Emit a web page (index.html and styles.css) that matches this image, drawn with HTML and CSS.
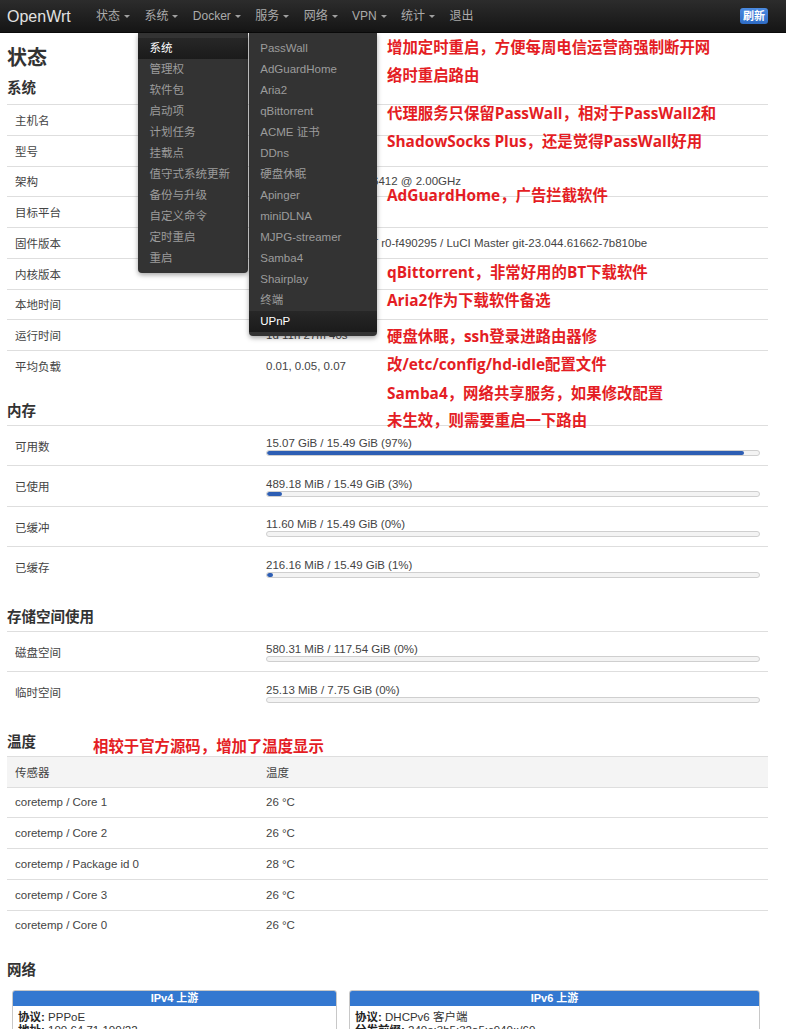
FILE: index.html
```html
<!DOCTYPE html>
<html lang="zh-CN">
<head>
<meta charset="utf-8">
<title>OpenWrt - 状态</title>
<link rel="stylesheet" href="styles.css">
</head>
<body>
<header class="navbar">
  <a class="brand">OpenWrt</a>
  <ul class="nav">
    <li class="nav-item">状态<i class="caret"></i></li>
    <li class="nav-item">系统<i class="caret"></i>
      <ul class="dropdown dd-system">
        <li class="active">系统</li>
        <li>管理权</li>
        <li>软件包</li>
        <li>启动项</li>
        <li>计划任务</li>
        <li>挂载点</li>
        <li>值守式系统更新</li>
        <li>备份与升级</li>
        <li>自定义命令</li>
        <li>定时重启</li>
        <li>重启</li>
      </ul>
    </li>
    <li class="nav-item">Docker<i class="caret"></i></li>
    <li class="nav-item">服务<i class="caret"></i>
      <ul class="dropdown dd-services">
        <li>PassWall</li>
        <li>AdGuardHome</li>
        <li>Aria2</li>
        <li>qBittorrent</li>
        <li>ACME 证书</li>
        <li>DDns</li>
        <li>硬盘休眠</li>
        <li>Apinger</li>
        <li>miniDLNA</li>
        <li>MJPG-streamer</li>
        <li>Samba4</li>
        <li>Shairplay</li>
        <li>终端</li>
        <li class="active">UPnP</li>
      </ul>
    </li>
    <li class="nav-item">网络<i class="caret"></i></li>
    <li class="nav-item">VPN<i class="caret"></i></li>
    <li class="nav-item">统计<i class="caret"></i></li>
    <li class="nav-item">退出</li>
  </ul>
  <span class="btn-refresh">刷新</span>
</header>

<main class="page">
  <h2 class="page-title">状态</h2>

  <h3 class="section-title first">系统</h3>
  <div class="table">
    <div class="row"><div class="cell-label">主机名</div><div class="cell-value">OpenWrt</div></div>
    <div class="row"><div class="cell-label">型号</div><div class="cell-value">Default string</div></div>
    <div class="row"><div class="cell-label">架构</div><div class="cell-value">Intel(R) Celeron(R) J6412 @ 2.00GHz</div></div>
    <div class="row"><div class="cell-label">目标平台</div><div class="cell-value">x86/64</div></div>
    <div class="row"><div class="cell-label">固件版本</div><div class="cell-value">OpenWrt SNAPSHOT r0-f490295 / LuCI Master git-23.044.61662-7b810be</div></div>
    <div class="row"><div class="cell-label">内核版本</div><div class="cell-value">5.15.94</div></div>
    <div class="row"><div class="cell-label">本地时间</div><div class="cell-value">2023-02-14 19:45:12</div></div>
    <div class="row"><div class="cell-label">运行时间</div><div class="cell-value">1d 11h 27m 40s</div></div>
    <div class="row"><div class="cell-label">平均负载</div><div class="cell-value">0.01, 0.05, 0.07</div></div>
  </div>

  <h3 class="section-title">内存</h3>
  <div class="table">
    <div class="row row-bar"><div class="cell-label">可用数</div><div class="cell-value"><div class="bar-text">15.07 GiB / 15.49 GiB (97%)</div><div class="bar"><div class="bar-fill" style="width:97%"></div></div></div></div>
    <div class="row row-bar"><div class="cell-label">已使用</div><div class="cell-value"><div class="bar-text">489.18 MiB / 15.49 GiB (3%)</div><div class="bar"><div class="bar-fill" style="width:3%"></div></div></div></div>
    <div class="row row-bar"><div class="cell-label">已缓冲</div><div class="cell-value"><div class="bar-text">11.60 MiB / 15.49 GiB (0%)</div><div class="bar"><div class="bar-fill" style="width:0%"></div></div></div></div>
    <div class="row row-bar"><div class="cell-label">已缓存</div><div class="cell-value"><div class="bar-text">216.16 MiB / 15.49 GiB (1%)</div><div class="bar"><div class="bar-fill" style="width:1.2%"></div></div></div></div>
  </div>

  <h3 class="section-title">存储空间使用</h3>
  <div class="table">
    <div class="row row-bar"><div class="cell-label">磁盘空间</div><div class="cell-value"><div class="bar-text">580.31 MiB / 117.54 GiB (0%)</div><div class="bar"><div class="bar-fill" style="width:0%"></div></div></div></div>
    <div class="row row-bar"><div class="cell-label">临时空间</div><div class="cell-value"><div class="bar-text">25.13 MiB / 7.75 GiB (0%)</div><div class="bar"><div class="bar-fill" style="width:0%"></div></div></div></div>
  </div>

  <h3 class="section-title">温度</h3>
  <div class="table">
    <div class="row row-head"><div class="cell-label">传感器</div><div class="cell-value">温度</div></div>
    <div class="row"><div class="cell-label">coretemp / Core 1</div><div class="cell-value">26 °C</div></div>
    <div class="row"><div class="cell-label">coretemp / Core 2</div><div class="cell-value">26 °C</div></div>
    <div class="row"><div class="cell-label">coretemp / Package id 0</div><div class="cell-value">28 °C</div></div>
    <div class="row"><div class="cell-label">coretemp / Core 3</div><div class="cell-value">26 °C</div></div>
    <div class="row"><div class="cell-label">coretemp / Core 0</div><div class="cell-value">26 °C</div></div>
  </div>

  <h3 class="section-title net-title">网络</h3>
  <div class="net-grid">
    <div class="net-box">
      <div class="net-head">IPv4 上游</div>
      <div class="net-body">
        <div><b>协议:</b> PPPoE</div>
        <div><b>地址:</b> 100.64.71.100/22</div>
      </div>
    </div>
    <div class="net-box">
      <div class="net-head">IPv6 上游</div>
      <div class="net-body">
        <div><b>协议:</b> DHCPv6 客户端</div>
        <div><b>分发前缀:</b> 240e:3b5:32a5:c940::/60</div>
      </div>
    </div>
  </div>
</main>

<div class="notes">
  <p class="note n1">增加定时重启，方便每周电信运营商强制断开网</p>
  <p class="note n2">络时重启路由</p>
  <p class="note n3">代理服务只保留PassWall，相对于PassWall2和</p>
  <p class="note n4">ShadowSocks Plus，还是觉得PassWall好用</p>
  <p class="note n5">AdGuardHome，广告拦截软件</p>
  <p class="note n6">qBittorrent，非常好用的BT下载软件</p>
  <p class="note n7">Aria2作为下载软件备选</p>
  <p class="note n8">硬盘休眠，ssh登录进路由器修</p>
  <p class="note n9">改/etc/config/hd-idle配置文件</p>
  <p class="note n10">Samba4，网络共享服务，如果修改配置</p>
  <p class="note n11">未生效，则需要重启一下路由</p>
  <p class="note n12">相较于官方源码，增加了温度显示</p>
</div>
</body>
</html>
```

FILE: styles.css
```css
html, body {
  margin: 0;
  padding: 0;
  background: #fff;
}

body {
  position: relative;
  font-family: "Liberation Sans", "Noto Sans CJK SC", sans-serif;
  font-size: 11.5px;
  color: #444;
  overflow: hidden;
}

/* ---------- navbar ---------- */
.navbar {
  display: flex;
  align-items: center;
  height: 33px;
  padding: 0 18px 0 7px;
  background: linear-gradient(#2c2c2c, #151515);
  border-bottom: 1px solid #0a0a0a;
  box-sizing: border-box;
  position: relative;
  z-index: 20;
}

.brand {
  width: 83px;
  color: #e2e2e2;
  font-size: 16px;
  line-height: 33px;
  font-family: "Liberation Sans", sans-serif;
}

.nav {
  display: flex;
  list-style: none;
  margin: 0;
  padding: 0;
  height: 33px;
}

.nav-item {
  position: relative;
  padding: 0 8.4px 0 6px;
  line-height: 32px;
  font-size: 12px;
  color: #ababab;
  white-space: nowrap;
}

.caret {
  display: inline-block;
  width: 0;
  height: 0;
  margin-left: 4px;
  vertical-align: middle;
  border-left: 3px solid transparent;
  border-right: 3px solid transparent;
  border-top: 3px solid #a0a0a0;
}

.dropdown {
  position: absolute;
  top: 33px;
  left: 0;
  margin: 0;
  padding: 5px 0 4px;
  list-style: none;
  background: #333;
  border-radius: 0 0 4px 4px;
  box-shadow: 0 2px 5px rgba(0, 0, 0, 0.35);
}

.dd-system { width: 110px; }
.dd-services { width: 128px; }

.dropdown li {
  height: 21px;
  line-height: 21px;
  padding-left: 11px;
  font-size: 11.5px;
  color: #9c9c9c;
  white-space: nowrap;
}

.dropdown li.active {
  color: #fff;
  background: linear-gradient(#272727, #1b1b1b);
}

.btn-refresh {
  margin-left: auto;
  padding: 2px 3px;
  font-size: 11px;
  line-height: 12px;
  font-weight: bold;
  color: #fff;
  background: linear-gradient(#4a8ae0, #2f6cc4);
  border-radius: 3px;
}

/* ---------- page ---------- */
.page {
  padding: 0 18px 0 7px;
}

.page-title {
  margin: 12px 0 0;
  font-size: 20px;
  line-height: 26px;
  font-weight: bold;
  color: #333;
}

.section-title {
  margin: 20px 0 4px;
  font-size: 14.5px;
  line-height: 20px;
  font-weight: bold;
  color: #333;
}

.section-title.first {
  margin-top: 7px;
  margin-bottom: 6px;
}

.table {
  display: flex;
  flex-direction: column;
}

.row {
  display: grid;
  grid-template-columns: 259px 1fr;
  align-items: center;
  height: 30.75px;
  box-sizing: border-box;
  border-top: 1px solid #dedede;
}

.cell-label {
  padding-left: 8px;
  color: #444;
  white-space: nowrap;
}

.cell-value {
  padding-right: 8px;
  color: #444;
  white-space: nowrap;
}

.row-bar {
  height: 40.5px;
}

.row-bar .cell-value {
  padding-top: 1px;
}

.bar-text {
  line-height: 14px;
}

.bar {
  height: 6px;
  box-sizing: border-box;
  border: 1px solid #cfcfcf;
  border-radius: 3px;
  background: #f3f3f3;
  overflow: hidden;
}

.bar-fill {
  height: 100%;
  background: #2d5eb4;
  border-radius: 2px;
}

.row-head {
  background: #f4f4f4;
}

/* ---------- network ---------- */
.net-title {
  margin-top: 20px;
  margin-bottom: 10px;
}

.net-grid {
  display: grid;
  grid-template-columns: 325px 1fr;
  gap: 12px;
  padding: 0 8px 0 5px;
}

.net-box {
  border: 1px solid #c8c8c8;
  border-radius: 3px;
  overflow: hidden;
  height: 60px;
}

.net-head {
  height: 15px;
  line-height: 15px;
  text-align: center;
  font-size: 11px;
  font-weight: bold;
  color: #fff;
  background: #3478d0;
}

.net-body {
  padding: 5px 5px;
  line-height: 13px;
  font-size: 11.5px;
  color: #333;
}

.net-body b {
  color: #222;
}

/* ---------- annotations ---------- */
.notes {
  position: absolute;
  top: 0;
  left: 0;
  z-index: 30;
}

.note {
  position: absolute;
  margin: 0;
  left: 387px;
  white-space: nowrap;
  font-family: "Open Sans", "Noto Sans CJK SC", sans-serif;
  font-weight: bold;
  font-size: 15.4px;
  line-height: 20px;
  color: #e41d24;
}

.n1 { top: 38px; }
.n2 { top: 66px; }
.n3 { top: 104px; }
.n4 { top: 132px; }
.n5 { top: 186px; }
.n6 { top: 263px; }
.n7 { top: 291px; }
.n8 { top: 327px; }
.n9 { top: 355px; }
.n10 { top: 384px; }
.n11 { top: 411px; }
.n12 { top: 737px; left: 93px; }
```
